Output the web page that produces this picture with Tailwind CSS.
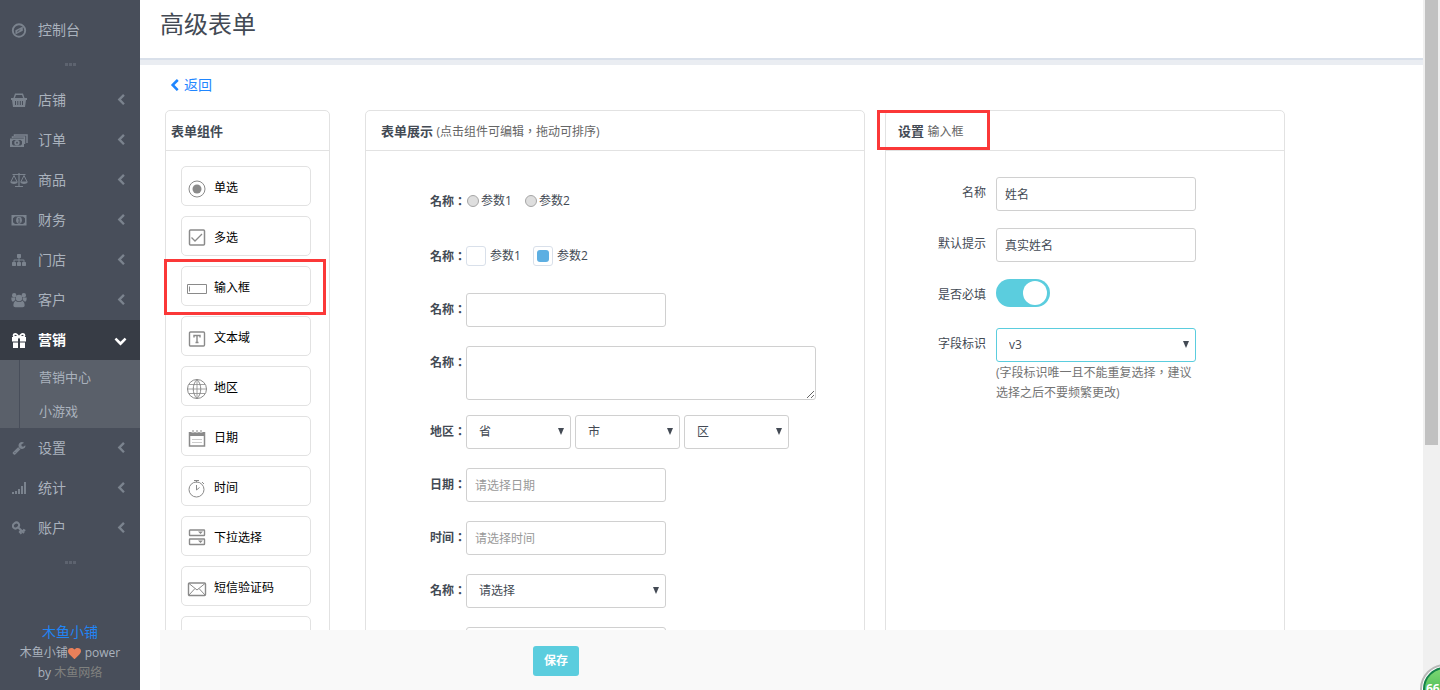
<!DOCTYPE html>
<html lang="zh-CN">
<head>
<meta charset="utf-8">
<title>高级表单</title>
<script src="https://cdn.jsdelivr.net/npm/@tailwindcss/browser@4"></script>
</head>
<body class="relative flex h-screen overflow-hidden bg-white font-['Open_Sans','Noto_Sans_CJK_SC',sans-serif] text-xs text-[#434a54]">

<svg class="hidden" aria-hidden="true">
  <symbol id="left" viewBox="0 0 1792 1792"><path d="M1427 301l-531 531 531 531q19 19 19 45t-19 45l-166 166q-19 19-45 19t-45-19l-742-742q-19-19-19-45t19-45l742-742q19-19 45-19t45 19l166 166q19 19 19 45t-19 45z"/></symbol>
  <symbol id="down" viewBox="0 0 1792 1792"><path d="M1683 808l-742 741q-19 19-45 19t-45-19l-742-741q-19-19-19-45.500t19-45.500l166-165q19-19 45-19t45 19l531 531 531-531q19-19 45-19t45 19l166 165q19 19 19 45.500t-19 45.500z"/></symbol>
</svg>

<aside class="flex w-[140px] shrink-0 flex-col bg-[#484e5a] text-sm text-[#aab2bd]">
  <nav class="flex flex-col pt-[10px]">
    <a href="#" class="flex h-10 items-center pl-[11px]">
      <svg class="mr-[11px] size-4 text-[#7b838e]" viewBox="0 0 16 16" fill="none" stroke="currentColor"><circle cx="8" cy="8.500" r="6.200" stroke-width="1.900"/><path fill="currentColor" stroke="none" fill-rule="evenodd" d="M11.800 4.500v4.300l-7.400 3.800V8.300zM9.800 7 6.400 8.900v1.500z"/></svg>
      控制台</a>
    <div class="flex h-[30px] items-center justify-center gap-px pb-[1px]"><i class="h-[3px] w-[3px] bg-[#5d636f]"></i><i class="h-[3px] w-[3px] bg-[#5d636f]"></i><i class="h-[3px] w-[3px] bg-[#5d636f]"></i></div>
    <a href="#" class="flex h-10 items-center pl-[11px]">
      <svg class="mr-[11px] size-4 text-[#7b838e]" viewBox="0 0 16 16"><path d="M3 6.500 4.500 2.200h7L13 6.500" fill="none" stroke="currentColor" stroke-width="1.400"/><path fill="currentColor" fill-rule="evenodd" d="M0 6h16v2h-1l-1 7H2L1 8H0zM4 9v4h1V9zm2.300 0v4h1V9zm2.500 0v4h1V9zM11 9v4h1V9z"/></svg>
      店铺<svg class="mr-[13px] ml-auto size-3 text-[#7b838e]" fill="currentColor"><use href="#left"/></svg></a>
    <a href="#" class="flex h-10 items-center pl-[10px]">
      <svg class="mr-[10px] h-4 w-[18px] text-[#7b838e]" viewBox="0 0 18 16" fill="none" stroke="currentColor"><path d="M2.500 6V5h12v7M4.500 4V3h12.500v8" stroke-width="1.500"/><path fill="currentColor" stroke="none" fill-rule="evenodd" d="M0 6.500h14V15H0zM3.500 8 2 9.300v2.900l1.500 1.300h7l1.500-1.300V9.300L10.500 8z"/><circle cx="7" cy="10.750" r="1.800" stroke-width="1.800"/></svg>
      订单<svg class="mr-[13px] ml-auto size-3 text-[#7b838e]" fill="currentColor"><use href="#left"/></svg></a>
    <a href="#" class="flex h-10 items-center pl-[10px]">
      <svg class="mr-[10px] h-4 w-[18px] text-[#7b838e]" viewBox="0 0 18 16" fill="none" stroke="currentColor"><path d="M2.500 2.500h13M9 1v13M5 14.500h8" stroke-width="1.200"/><path d="M4 3.500.8 10h6.400zM14 3.500 10.800 10h6.400z"/><path fill="currentColor" stroke="none" d="M.3 10h7.400c-.5 2.600-6.900 2.600-7.400 0zM10.300 10h7.400c-.5 2.600-6.900 2.600-7.400 0z"/></svg>
      商品<svg class="mr-[13px] ml-auto size-3 text-[#7b838e]" fill="currentColor"><use href="#left"/></svg></a>
    <a href="#" class="flex h-10 items-center pl-[11px]">
      <svg class="mr-[11px] size-4 text-[#7b838e]" viewBox="0 0 16 16"><path fill="currentColor" fill-rule="evenodd" d="M.5 3h15v10.500H.5zM4 4.500 2 6.200v4L4 12h8l2-1.800v-4L12 4.500z"/><ellipse cx="8" cy="8.250" rx="2.900" ry="3.400" fill="currentColor"/><path d="M7 7.200 8.200 6.300v3.500M7 10.200h2.300" stroke="#484e5a" fill="none" stroke-width=".8"/></svg>
      财务<svg class="mr-[13px] ml-auto size-3 text-[#7b838e]" fill="currentColor"><use href="#left"/></svg></a>
    <a href="#" class="flex h-10 items-center pl-[12px]">
      <svg class="mr-3 size-[14px] text-[#7b838e]" viewBox="0 0 1792 1792" fill="currentColor"><path d="M1792 1248v320q0 40-28 68t-68 28h-320q-40 0-68-28t-28-68v-320q0-40 28-68t68-28h96v-192h-512v192h96q40 0 68 28t28 68v320q0 40-28 68t-68 28h-320q-40 0-68-28t-28-68v-320q0-40 28-68t68-28h96v-192h-512v192h96q40 0 68 28t28 68v320q0 40-28 68t-68 28h-320q-40 0-68-28t-28-68v-320q0-40 28-68t68-28h96v-192q0-52 38-90t90-38h512v-192h-96q-40 0-68-28t-28-68v-320q0-40 28-68t68-28h320q40 0 68 28t28 68v320q0 40-28 68t-68 28h-96v192h512q52 0 90 38t38 90v192h96q40 0 68 28t28 68z"/></svg>
      门店<svg class="mr-[13px] ml-auto size-3 text-[#7b838e]" fill="currentColor"><use href="#left"/></svg></a>
    <a href="#" class="flex h-10 items-center pl-[11px]">
      <svg class="mr-[11px] size-4 text-[#7b838e]" viewBox="0 0 16 16" fill="currentColor"><circle cx="3.200" cy="3.200" r="2.200"/><circle cx="12.800" cy="3.200" r="2.200"/><path d="M.3 5.500h4v3H3.500L2.500 9.500H1.200Q.2 9 .3 5.500zM15.700 5.500h-4v3h.8l1 1h1.300Q15.800 9 15.700 5.500z"/><circle cx="8" cy="6" r="3.200"/><path d="M4.300 8.800Q8 11.200 11.700 8.800q2 1.500 2 4.500 0 1.900-2 1.900H4.300q-2 0-2-1.900 0-3 2-4.500z"/></svg>
      客户<svg class="mr-[13px] ml-auto size-3 text-[#7b838e]" fill="currentColor"><use href="#left"/></svg></a>
    <a href="#" class="flex h-10 items-center bg-[#373c45] pl-[11px] font-bold text-white">
      <svg class="mr-[11px] size-4" viewBox="0 0 16 16" fill="currentColor"><path d="M1 5h6v4.500H1zM9 5h6v4.500H9zM2 10.500h5V16H2zM9 10.500h5V16H9z"/><path d="M8 5.300C6.500 2.500 5 1.700 4 1.800 2 2 2 4.800 4.200 4.800h7.600C14 4.800 14 2 12 1.800 11 1.700 9.500 2.500 8 5.300z" fill="none" stroke="currentColor" stroke-width="1.800"/></svg>
      营销<svg class="mr-[13px] ml-auto size-[13px]" fill="currentColor"><use href="#down"/></svg></a>
    <div class="flex flex-col bg-[#5a606a] pl-[19px] text-[13px]">
      <div class="flex flex-col border-l border-[#484e5a] pl-[19px]">
        <a href="#" class="h-[34px] leading-[34px]">营销中心</a>
        <a href="#" class="h-[34px] leading-[34px]">小游戏</a>
      </div>
    </div>
    <a href="#" class="flex h-10 items-center pl-[12px]">
      <svg class="mr-3 size-[14px] text-[#7b838e]" viewBox="0 0 1792 1792" fill="currentColor"><path d="M448 1472q0-26-19-45t-45-19-45 19-19 45 19 45 45 19 45-19 19-45zm644-420l-682 682q-37 37-90 37-52 0-91-37l-106-108q-38-36-38-90 0-53 38-91l681-681q39 98 114.500 173.500t173.500 114.500zm634-435q0 39-23 106-47 134-164.500 217.500t-258.500 83.500q-185 0-316.500-131.500t-131.500-316.500 131.500-316.500 316.500-131.500q58 0 121.500 16.500t107.500 46.500q16 11 16 28t-16 28l-293 169v224l193 107q5-3 79-48.500t135.500-81 70.500-35.500q15 0 23.500 10t8.500 25z"/></svg>
      设置<svg class="mr-[13px] ml-auto size-3 text-[#7b838e]" fill="currentColor"><use href="#left"/></svg></a>
    <a href="#" class="flex h-10 items-center pl-[12px]">
      <svg class="mr-3 size-[14px] text-[#7b838e]" viewBox="0 0 14 14" fill="currentColor"><path d="M0 11h2v2H0zM3 10h2v3H3zM6 8h2v5H6zM9 5h2v8H9zM12 1h2v12h-2z"/></svg>
      统计<svg class="mr-[13px] ml-auto size-3 text-[#7b838e]" fill="currentColor"><use href="#left"/></svg></a>
    <a href="#" class="flex h-10 items-center pl-[12px]">
      <svg class="mr-3 size-[14px] text-[#7b838e]" viewBox="0 0 14 14" fill="none" stroke="currentColor" stroke-width="2"><ellipse cx="4" cy="4.500" rx="3.200" ry="2.700" transform="rotate(-40 4 4.500)"/><path d="m6 6.300 6 5.700M9 9.300 7.800 11l1.700 1.800M11 8.500l2.200 1.400"/></svg>
      账户<svg class="mr-[13px] ml-auto size-3 text-[#7b838e]" fill="currentColor"><use href="#left"/></svg></a>
    <div class="flex h-[30px] items-center justify-center gap-px pb-[1px]"><i class="h-[3px] w-[3px] bg-[#5d636f]"></i><i class="h-[3px] w-[3px] bg-[#5d636f]"></i><i class="h-[3px] w-[3px] bg-[#5d636f]"></i></div>
  </nav>
  <div class="mt-auto mb-[7px] text-center text-xs leading-5">
    <a href="#" class="block text-sm leading-[22px] text-[#2284f3]">木鱼小铺</a>
    <div class="flex items-center justify-center">木鱼小铺<svg class="mr-1 size-[13px] text-[#e9805a]" viewBox="0 0 1792 1792" fill="currentColor"><path d="M896 1664q-26 0-44-18l-624-602q-10-8-27.500-26t-55.500-65.500-68-97.500-53.500-121-23.500-138q0-220 127-344t351-124q62 0 126.500 21.500t120 58 95.500 68.500 76 68q36-36 76-68t95.500-68.500 120-58 126.500-21.500q224 0 351 124t127 344q0 221-229 450l-623 600q-18 18-44 18z"/></svg>power</div>
    <div>by <a href="#" class="text-[#80817f]">木鱼网络</a></div>
  </div>
</aside>

<main class="flex min-w-0 flex-1 flex-col">
  <header class="h-[65px] shrink-0 border-b-[5px] border-[#eaedf2]">
    <h1 class="h-[60px] border-b-2 border-[#d9e0ea] pl-5 text-2xl leading-[48px]">高级表单</h1>
  </header>

  <div class="min-h-0 flex-1 overflow-hidden pl-[25px]">
    <a href="#" class="flex h-[45px] items-center pb-[5px] pl-[3px] text-sm text-[#1f86ff]"><svg class="mr-[3px] size-[13px]" fill="currentColor"><use href="#left"/></svg>返回</a>

    <div class="flex items-stretch">
      <section class="relative mr-[35px] h-[640px] w-[165px] shrink-0 rounded-[5px] border border-[#e2e2e2]">
        <h2 class="h-10 border-b border-[#e2e2e2] pl-[5px] text-[13px] leading-10 font-bold">表单组件</h2>
        <div class="flex flex-col gap-[10px] px-[15px] pt-[15px] text-black">
          <button class="flex h-10 w-[130px] items-center rounded-[5px] border border-[#e2e2e2] pt-[3px] pl-[5px]"><svg class="mt-[3px] mr-[7px] size-5" viewBox="0 0 20 20" fill="none" stroke="#8a8a8a"><circle cx="10" cy="10" r="8"/><circle cx="10" cy="10" r="4.500" fill="#8a8a8a" stroke="none"/></svg>单选</button>
          <button class="flex h-10 w-[130px] items-center rounded-[5px] border border-[#e2e2e2] pt-[3px] pl-[5px]"><svg class="mr-[7px] size-5" viewBox="0 0 20 20" fill="none" stroke="#8a8a8a" stroke-width="1.500"><rect x="2.500" y="2" width="15" height="15" rx="1"/><path d="m4.500 9.500 3.500 3.500 7-7" stroke-width="1.300"/></svg>多选</button>
          <button class="flex h-10 w-[130px] items-center rounded-[5px] border border-[#e2e2e2] pt-[3px] pl-[5px]"><svg class="mt-[3px] mr-[7px] size-5" viewBox="0 0 20 20" fill="none" stroke="#8a8a8a"><path d="M.5 5.500h19v9H.5zM2.500 7.500v5"/></svg>输入框</button>
          <button class="flex h-10 w-[130px] items-center rounded-[5px] border border-[#e2e2e2] pt-[3px] pl-[5px]"><svg class="mt-[3px] mr-[7px] size-5" viewBox="0 0 20 20" fill="none" stroke="#8a8a8a" stroke-width="1.400"><rect x="2.500" y="3" width="15" height="14" rx="1"/><path d="M7 8.500v-2h6v2M10 6.500v7M8.500 13.500h3"/></svg>文本域</button>
          <button class="flex h-10 w-[130px] items-center rounded-[5px] border border-[#e2e2e2] pt-[3px] pl-[5px]"><svg class="mt-[3px] mr-[7px] size-5" viewBox="0 0 20 20" fill="none" stroke="#8a8a8a"><circle cx="10" cy="10" r="9.500"/><path d="M10 .5v19M2 5.500h16M2 14.500h16M.5 10h19" stroke-width=".8"/><path d="M10 .5c-5 5-5 14 0 19M10 .5c5 5 5 14 0 19"/></svg>地区</button>
          <button class="flex h-10 w-[130px] items-center rounded-[5px] border border-[#e2e2e2] pt-[3px] pl-[5px]"><svg class="mt-[3px] mr-[7px] size-5" viewBox="0 0 20 20" fill="none" stroke="#8a8a8a"><path d="M2.500 3v14h15V3" stroke-width="1.500"/><path d="M2 3h16v4H2z" fill="#8a8a8a" stroke="none"/><path d="M6 1v3M10 1v3M14 1v3" stroke="#fff" stroke-width="2.500"/><path d="M6 1v3M10 1v3M14 1v3"/><path d="M5 10.500h10M5 13.500h10" stroke="#ccc"/></svg>日期</button>
          <button class="flex h-10 w-[130px] items-center rounded-[5px] border border-[#e2e2e2] pt-[3px] pl-[5px]"><svg class="mt-[3px] mr-[7px] size-5" viewBox="0 0 20 20" fill="none" stroke="#8a8a8a"><circle cx="9.500" cy="10.500" r="7.500"/><path d="M7 1.500h5M9.500 1.500v2M9.500 6v5l3-2.500M15 3l2 2"/></svg>时间</button>
          <button class="flex h-10 w-[130px] items-center rounded-[5px] border border-[#e2e2e2] pt-[3px] pl-[5px]"><svg class="mt-[3px] mr-[7px] size-5" viewBox="0 0 20 20" fill="none" stroke="#8a8a8a" stroke-width="1.400"><rect x="2.500" y="1" width="15" height="5.500" rx=".5"/><rect x="2.500" y="10" width="15" height="5.500" rx=".5"/><path d="M11 2.500h5L13.500 5zM11 11.500h5L13.500 14z" fill="#8a8a8a" stroke="none"/></svg>下拉选择</button>
          <button class="flex h-10 w-[130px] items-center rounded-[5px] border border-[#e2e2e2] pt-[3px] pl-[5px]"><svg class="mt-[3px] mr-[7px] size-5" viewBox="0 0 20 20" fill="none" stroke="#8a8a8a"><rect x="1.500" y="4" width="17" height="12.500" rx="1" stroke-width="1.400"/><path d="m2 4.500 8 6.500 8-6.500M2 16l6-6.500M18 16l-6-6.500"/></svg>短信验证码</button>
          <button class="h-10 w-[130px] rounded-[5px] border border-[#e2e2e2]" aria-label="更多"></button>
        </div>
        <div class="pointer-events-none absolute top-[148px] -left-[2px] h-14 w-[162px] border-[3px] border-[#fb3838]"></div>
      </section>

      <section class="mr-5 w-[500px] shrink-0 rounded-[5px] border border-[#e2e2e2]">
        <h2 class="h-10 border-b border-[#e2e2e2] pl-[15px] text-[13px] leading-10 font-bold">表单展示 <small lang="zh-TW" class="text-xs font-normal text-[#656565]">(点击组件可编辑，拖动可排序)</small></h2>
        <form class="flex flex-col gap-[19px] pt-[34px] pl-16 text-[#434a54]">
          <fieldset class="flex h-9 items-start">
            <legend lang="zh-TW" class="float-left w-9 leading-[34px] font-bold whitespace-nowrap">名称：</legend>
            <label class="flex items-center leading-8"><input type="radio" name="r" class="mr-[2px] ml-px size-3 appearance-none rounded-full border border-[#a6a6a6] bg-[#dedede]">参数1</label>
            <label class="ml-[13px] flex items-center leading-8"><input type="radio" name="r" class="mr-[2px] size-3 appearance-none rounded-full border border-[#a6a6a6] bg-[#dedede]">参数2</label>
          </fieldset>
          <fieldset class="flex h-[34px] items-start">
            <legend lang="zh-TW" class="float-left w-9 leading-[34px] font-bold whitespace-nowrap">名称：</legend>
            <label class="flex items-center leading-8"><input type="checkbox" class="mr-1 size-5 appearance-none rounded-[3px] border border-[#d9e0ea] bg-white">参数1</label>
            <label class="ml-3 flex items-center leading-8"><input type="checkbox" checked class="mr-1 size-5 appearance-none rounded-[3px] border border-[#d9e0ea] bg-white p-[3px] before:block before:size-3 before:rounded-[3px] before:bg-[#5dafe2]">参数2</label>
          </fieldset>
          <div class="flex items-start"><label lang="zh-TW" for="f1" class="w-9 shrink-0 leading-[34px] font-bold whitespace-nowrap">名称：</label><input id="f1" class="h-[34px] w-[200px] rounded-[3px] border border-[#d0d0d0] px-2"></div>
          <div class="-mb-1 flex items-start"><label lang="zh-TW" for="f2" class="w-9 shrink-0 leading-[34px] font-bold whitespace-nowrap">名称：</label><textarea id="f2" class="h-[54px] w-[350px] rounded-[3px] border border-[#d0d0d0] px-2"></textarea></div>
          <div class="flex items-start"><label lang="zh-TW" for="f3" class="w-9 shrink-0 leading-[34px] font-bold whitespace-nowrap">地区：</label>
            <div class="flex gap-1">
              <div class="relative"><select id="f3" class="block h-[34px] w-[105px] appearance-none rounded-[3px] border border-[#d0d0d0] pl-3"><option>省</option></select><svg class="pointer-events-none absolute top-[13px] right-[7px] h-[7px] w-[6px]" viewBox="0 0 6 7"><path d="M0 0h6L3 7z" fill="#434a54"/></svg></div>
              <div class="relative"><select aria-label="市" class="block h-[34px] w-[105px] appearance-none rounded-[3px] border border-[#d0d0d0] pl-3"><option>市</option></select><svg class="pointer-events-none absolute top-[13px] right-[7px] h-[7px] w-[6px]" viewBox="0 0 6 7"><path d="M0 0h6L3 7z" fill="#434a54"/></svg></div>
              <div class="relative"><select aria-label="区" class="block h-[34px] w-[105px] appearance-none rounded-[3px] border border-[#d0d0d0] pl-3"><option>区</option></select><svg class="pointer-events-none absolute top-[13px] right-[7px] h-[7px] w-[6px]" viewBox="0 0 6 7"><path d="M0 0h6L3 7z" fill="#434a54"/></svg></div>
            </div>
          </div>
          <div class="flex items-start"><label lang="zh-TW" for="f4" class="w-9 shrink-0 leading-[34px] font-bold whitespace-nowrap">日期：</label><input id="f4" placeholder="请选择日期" class="h-[34px] w-[200px] rounded-[3px] border border-[#d0d0d0] px-2 placeholder:text-[#999]"></div>
          <div class="flex items-start"><label lang="zh-TW" for="f5" class="w-9 shrink-0 leading-[34px] font-bold whitespace-nowrap">时间：</label><input id="f5" placeholder="请选择时间" class="h-[34px] w-[200px] rounded-[3px] border border-[#d0d0d0] px-2 placeholder:text-[#999]"></div>
          <div class="flex items-start"><label lang="zh-TW" for="f6" class="w-9 shrink-0 leading-[34px] font-bold whitespace-nowrap">名称：</label><div class="relative"><select id="f6" class="block h-[34px] w-[200px] appearance-none rounded-[3px] border border-[#d0d0d0] pl-3"><option>请选择</option></select><svg class="pointer-events-none absolute top-[13px] right-[7px] h-[7px] w-[6px]" viewBox="0 0 6 7"><path d="M0 0h6L3 7z" fill="#434a54"/></svg></div></div>
          <div class="pl-9"><input aria-label="验证码" class="h-[34px] w-[200px] rounded-[3px] border border-[#d0d0d0] px-2"></div>
        </form>
      </section>

      <section class="relative w-[400px] shrink-0 rounded-[5px] border border-[#e2e2e2]">
        <h2 class="h-10 border-b border-[#e2e2e2] pl-3 text-[13px] leading-10 font-bold">设置 <small class="text-xs font-normal text-[#656565]">输入框</small></h2>
        <form class="flex flex-col gap-[17px] pt-[26px]">
          <div class="flex items-start gap-[10px]"><label for="s1" class="w-[100px] text-right leading-8">名称</label><input id="s1" value="姓名" class="h-[34px] w-[200px] rounded-[3px] border border-[#d0d0d0] px-2"></div>
          <div class="flex items-start gap-[10px]"><label for="s2" class="w-[100px] text-right leading-8">默认提示</label><input id="s2" value="真实姓名" class="h-[34px] w-[200px] rounded-[3px] border border-[#d0d0d0] px-2"></div>
          <div class="flex h-8 items-start gap-[10px]"><label for="s3" class="w-[100px] text-right leading-8">是否必填</label><input id="s3" type="checkbox" checked class="flex h-7 w-[54px] appearance-none justify-end rounded-full bg-[#5bcdde] p-[2px] pr-[3px] before:size-6 before:rounded-full before:bg-white"></div>
          <div class="flex items-start gap-[10px]"><label for="s4" class="w-[100px] text-right leading-8">字段标识</label>
            <div class="w-[200px]">
              <div class="relative"><select id="s4" class="block h-[34px] w-full appearance-none rounded-[3px] border border-[#5bcdde] pl-3"><option>v3</option></select><svg class="pointer-events-none absolute top-[13px] right-[7px] h-[7px] w-[6px]" viewBox="0 0 6 7"><path d="M0 0h6L3 7z" fill="#434a54"/></svg></div>
              <p lang="zh-TW" class="pt-px leading-5 text-[#737373]">(字段标识唯一且不能重复选择，建议选择之后不要频繁更改)</p>
            </div>
          </div>
        </form>
        <div class="pointer-events-none absolute -top-px -left-[9px] h-10 w-[113px] border-[3px] border-[#fb3838]"></div>
      </section>
    </div>
  </div>

  <footer class="ml-5 flex h-[60px] shrink-0 items-start bg-[#f9f9f9] pt-4 pl-[373px]">
    <button class="h-[30px] w-[46px] rounded-[3px] bg-[#5bcdde] font-bold text-white">保存</button>
  </footer>
</main>

<div class="w-[17px] shrink-0 bg-[#f0f0f0] px-[2px]"><div class="h-[445px] bg-[#c1c1c1]"></div></div>

<div class="absolute -right-[30px] -bottom-6 flex size-[50px] items-center rounded-full border-2 border-[#b9b9b9] bg-white p-px">
  <div class="flex size-full items-center rounded-full border-2 border-[#14824a] bg-linear-to-b from-[#7bd873] to-[#27ab45] pl-px text-xs font-bold text-white">66</div>
</div>
</body>
</html>
